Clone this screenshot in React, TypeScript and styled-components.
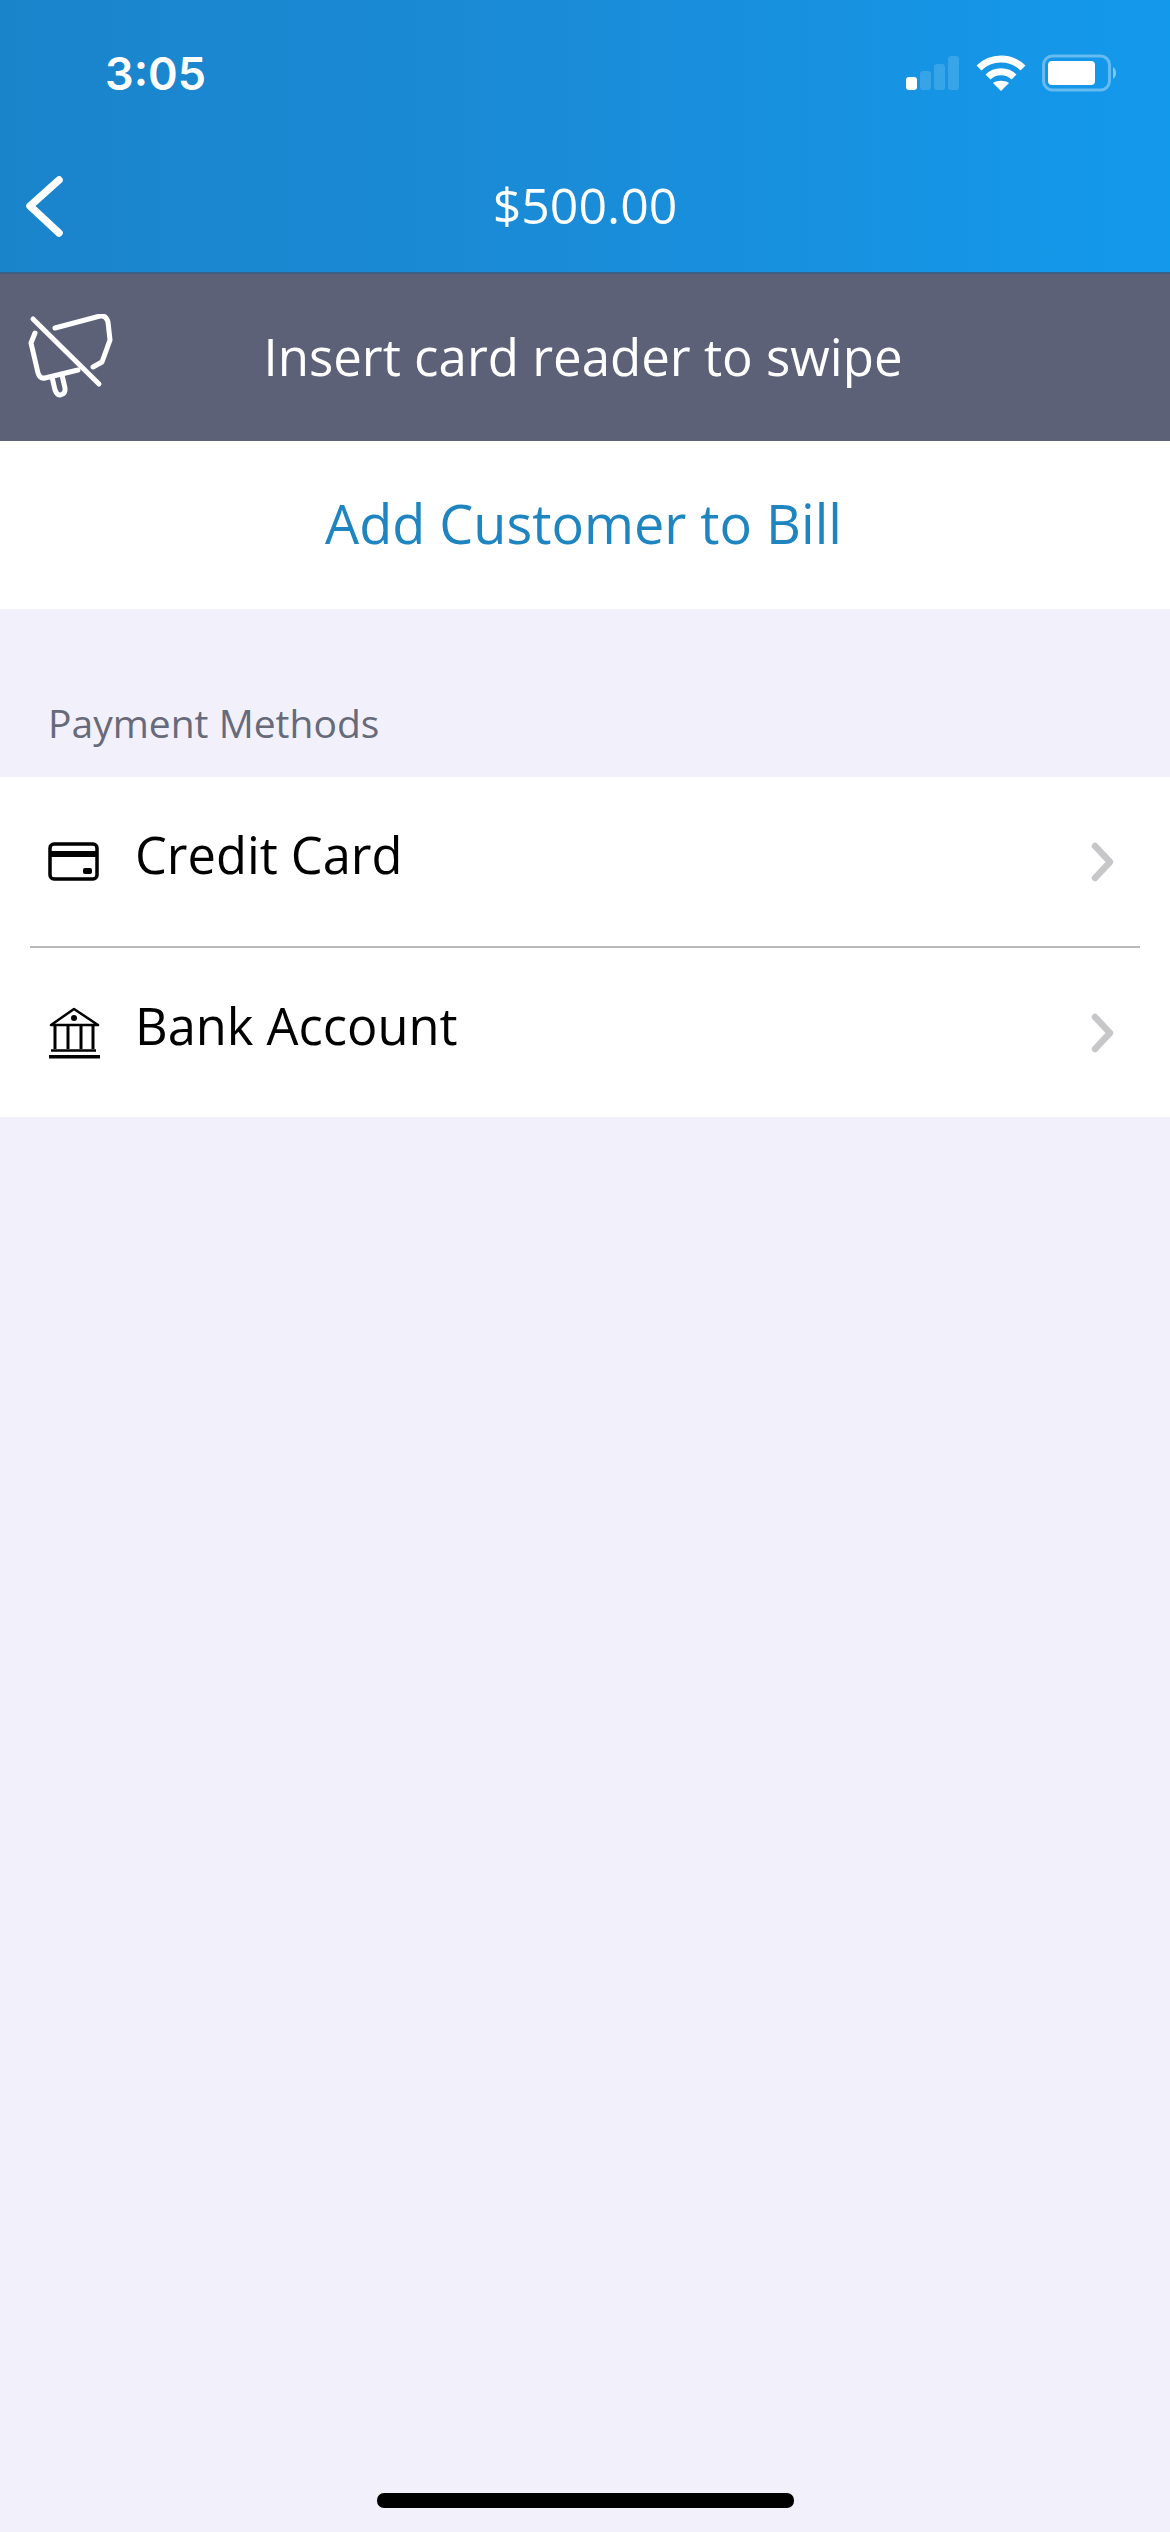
import React from "react";
import styled, { createGlobalStyle } from "styled-components";

const Global = createGlobalStyle`
  html, body { margin: 0; padding: 0; background: #f2f1fb; }
  * { box-sizing: border-box; }
`;

const Page = styled.div`
  width: 1170px;
  height: 2532px;
  position: relative;
  display: flex;
  flex-direction: column;
  background: #f2f1fb;
  font-family: "Open Sans", sans-serif;
  overflow: hidden;
`;

const Header = styled.header`
  height: 274px;
  display: flex;
  flex-direction: column;
  background: linear-gradient(90deg, #1a84cb 0%, #1a8cd8 50%, #1399ec 100%);
  border-bottom: 2px solid #3d5f85;
`;

const StatusBar = styled.div`
  height: 146px;
  display: flex;
  align-items: flex-start;
  justify-content: space-between;
  padding: 50px 52px 0 105px;
`;

const Clock = styled.span`
  font-family: Inter, "Liberation Sans", sans-serif;
  font-weight: 600;
  font-size: 45px;
  line-height: 48px;
  color: #fff;
`;

const StatusIcons = styled.div`
  display: flex;
  align-items: center;
  gap: 16px;
  padding-top: 4px;
  margin-left: auto;
`;

const NavBar = styled.div`
  flex: 1;
  position: relative;
  display: flex;
  align-items: center;
  justify-content: center;
`;

const BackButton = styled.svg`
  position: absolute;
  left: 24px;
  top: 28px;
`;

const NavTitle = styled.h1`
  margin: 0 0 8px;
  font-weight: 400;
  font-size: 50px;
  color: #fff;
`;

const Banner = styled.div`
  height: 167px;
  position: relative;
  display: flex;
  align-items: center;
  justify-content: center;
  background: #5c6178;
`;

const BannerIcon = styled.svg`
  position: absolute;
  left: 24px;
  top: 40px;
`;

const BannerText = styled.span`
  font-size: 51px;
  color: #fff;
  margin: 0 4px 4px 0;
`;

const CustomerAction = styled.div`
  height: 168px;
  display: flex;
  align-items: center;
  justify-content: center;
  background: #fff;
  color: #1f85c0;
  font-size: 54px;
  padding: 0 3px 4px 0;
`;

const SectionLabel = styled.div`
  height: 168px;
  display: flex;
  align-items: flex-end;
  padding: 0 0 28px 48px;
  color: #676a7a;
  font-size: 39px;
`;

const List = styled.div`
  background: #fff;
  display: flex;
  flex-direction: column;
`;

const Row = styled.div`
  height: 169px;
  display: flex;
  align-items: center;
  padding: 0 54px 0 48px;
`;

const RowIcon = styled.svg`
  flex: none;
  margin-right: 35px;
`;

const RowLabel = styled.span`
  flex: 1;
  font-size: 50.6px;
  color: #000;
  margin-bottom: 15px;
`;

const Divider = styled.div`
  height: 2px;
  margin: 0 30px;
  background: #b9b9b9;
`;

const HomeIndicator = styled.div`
  position: absolute;
  left: 377px;
  bottom: 24px;
  width: 417px;
  height: 15px;
  border-radius: 7px;
  background: #000;
`;

const Chevron = () => (
  <svg width="26" height="42" viewBox="0 0 26 42" fill="none" stroke="#c7c7c9" strokeWidth="6.5" strokeLinecap="round" strokeLinejoin="round">
    <path d="M5 5 L20 21 L5 37" />
  </svg>
);

export default function App() {
  return (
    <Page>
      <Global />
      <Header>
        <StatusBar>
          <Clock>3:05</Clock>
          <StatusIcons>
            <svg width="54" height="36" viewBox="0 0 54 36" fill="#fff">
              <rect x="0" y="22" width="11" height="13" rx="3" />
              <rect x="14" y="16" width="11" height="19" rx="3" opacity=".15" />
              <rect x="28" y="9" width="11" height="26" rx="3" opacity=".15" />
              <rect x="42" y="1" width="11" height="34" rx="3" opacity=".15" />
            </svg>
            <svg width="50" height="38" viewBox="0 0 50 38" fill="none" stroke="#fff" strokeWidth="7">
              <path d="M3 14 C15 2 35 2 47 14" />
              <path d="M12 23 C19 16 31 16 38 23" />
              <path d="M25 37 L17 29 C21 26 29 26 33 29 Z" fill="#fff" stroke="none" />
            </svg>
            <svg width="76" height="38" viewBox="0 0 76 38" fill="none">
              <rect x="1.5" y="2" width="66" height="34" rx="9" stroke="#fff" strokeOpacity=".35" strokeWidth="3" />
              <rect x="6" y="7" width="47" height="24" rx="4" fill="#fff" />
              <path d="M71 13 C75 15 75 23 71 25 Z" fill="#fff" fillOpacity=".45" />
            </svg>
          </StatusIcons>
        </StatusBar>
        <NavBar>
          <BackButton width="40" height="64" viewBox="0 0 40 64" fill="none" stroke="#fff" strokeWidth="7.5" strokeLinecap="round" strokeLinejoin="round">
            <path d="M35 6 L6 32 L35 59" />
          </BackButton>
          <NavTitle>$500.00</NavTitle>
        </NavBar>
      </Header>
      <Banner>
        <BannerIcon width="90" height="90" viewBox="0 0 90 90" fill="none" stroke="#fff" strokeWidth="5" strokeLinecap="round" strokeLinejoin="round">
          <path d="M31 14 L76 2 Q82 1 84 8 L86 26 L78 48 L69 53" />
          <path d="M11 19 L7 29 L14 59 Q16 65 21 64 L54 56" />
          <path d="M28 63 L31 76 Q33 81 36 81 Q42 80 41 74 L38 61" />
          <path d="M9 5 L75 70" />
        </BannerIcon>
        <BannerText>Insert card reader to swipe</BannerText>
      </Banner>
      <CustomerAction>Add Customer to Bill</CustomerAction>
      <SectionLabel>Payment Methods</SectionLabel>
      <List>
        <Row>
          <RowIcon width="52" height="40" viewBox="0 0 52 40" fill="none">
            <rect x="2" y="2" width="47" height="35" rx="4" stroke="#000" strokeWidth="3.5" />
            <rect x="2" y="9" width="47" height="6" fill="#000" />
            <rect x="35" y="26" width="9" height="6" rx="2" fill="#000" />
          </RowIcon>
          <RowLabel>Credit Card</RowLabel>
          <Chevron />
        </Row>
        <Divider />
        <Row>
          <RowIcon width="52" height="52" viewBox="0 0 52 52" fill="none" stroke="#000" strokeWidth="3">
            <path d="M3 18 L26 2 L50 18 Z" strokeWidth="2.5" strokeLinejoin="round" />
            <circle cx="26" cy="11" r="3" fill="#000" stroke="none" />
            <path d="M7 19 V42 M20 19 V42 M33 19 V42 M45 19 V42" />
            <path d="M3 43.5 H48" strokeWidth="2.5" />
            <rect x="1" y="48" width="51" height="3.5" fill="#000" stroke="none" />
          </RowIcon>
          <RowLabel>Bank Account</RowLabel>
          <Chevron />
        </Row>
      </List>
      <HomeIndicator />
    </Page>
  );
}
